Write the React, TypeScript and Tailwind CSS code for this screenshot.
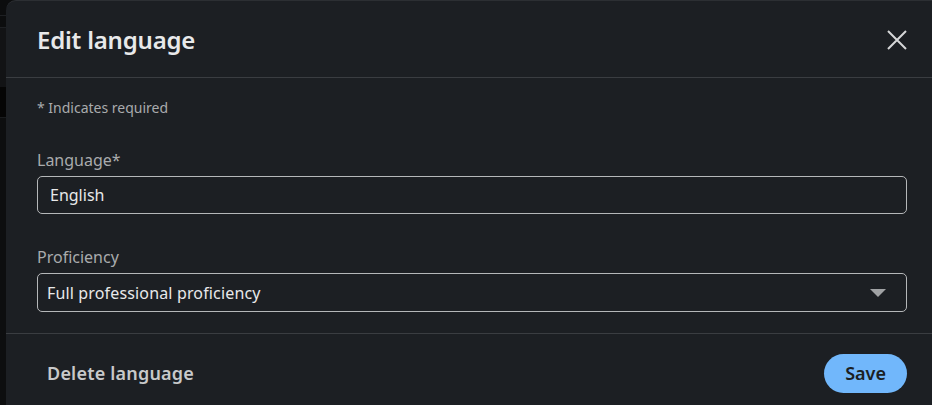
import React from "react";

function Field({ label, children }: { label: string; children: React.ReactNode }) {
  return (
    <div className="flex flex-col gap-[4px]">
      <label className="text-[16px] leading-[24px] text-[#a9abad]">{label}</label>
      {children}
    </div>
  );
}

export default function App() {
  return (
    <div
      className="w-[932px] h-[405px] flex overflow-hidden bg-[#0c0d0e]"
      style={{ fontFamily: '"Noto Sans", "Open Sans", sans-serif' }}
    >
      {/* page behind the backdrop */}
      <div className="w-[6px] flex flex-col">
        <div className="h-[15px]" />
        <div className="h-[12px] border-t border-[#1e2023]" />
        <div className="h-[60px] border-t border-[#1e2023] bg-[#121315]" />
        <div className="h-[30px] bg-[#050505]" />
        <div className="flex-1 border-t border-[#1a1c1e] bg-[#0d0e0f]" />
      </div>

      <div className="flex-1 flex flex-col rounded-tl-[10px] bg-[#1c1f23] border-t border-[#2c2f33]">
        <header className="h-[77px] shrink-0 flex items-center justify-between pl-[31px] pr-[25px] pt-[1px] border-b border-[#3a3d41]">
          <h2 className="text-[24px] font-semibold text-[#e8e9ea] tracking-[-0.2px]">Edit language</h2>
          <button aria-label="Dismiss" className="w-[20px] h-[20px] flex items-center justify-center text-[#d6d7d8]">
            <svg width="20" height="20" viewBox="0 0 20 20" fill="none" stroke="currentColor" strokeWidth="2">
              <path d="M1 1l18 18M19 1L1 19" />
            </svg>
          </button>
        </header>

        <div className="flex flex-col pl-[31px] pr-[25px] pt-[20px]">
          <p className="text-[14px] leading-[20px] text-[#a9abad]">* Indicates required</p>

          <div className="mt-[30px]">
            <Field label="Language*">
              <div className="h-[38px] flex items-center px-[12px] rounded-[5px] border border-[#b5b7b9] text-[16px] text-[#e8e9ea]">
                English
              </div>
            </Field>
          </div>

          <div className="mt-[31px]">
            <Field label="Proficiency">
              <div className="h-[39px] flex items-center justify-between pl-[9px] pr-[20px] rounded-[5px] border border-[#b5b7b9] text-[16px] text-[#e8e9ea] tracking-[0.15px]">
                <span>Full professional proficiency</span>
                <svg width="16" height="8" viewBox="0 0 16 8">
                  <path d="M0 0h16L8 8z" fill="#a0a2a4" />
                </svg>
              </div>
            </Field>
          </div>
        </div>

        <footer className="mt-[21px] flex-1 flex items-start justify-between border-t border-[#3a3d41] pl-[31px] pr-[25px] pt-[20px]">
          <button className="h-[39px] px-[10px] text-[18px] font-semibold text-[#c8c9ca] tracking-[0.2px]">
            Delete language
          </button>
          <button className="h-[39px] px-[21px] rounded-full bg-[#71b7fb] text-[18px] font-semibold text-[#1b1f23]">
            Save
          </button>
        </footer>
      </div>
    </div>
  );
}
